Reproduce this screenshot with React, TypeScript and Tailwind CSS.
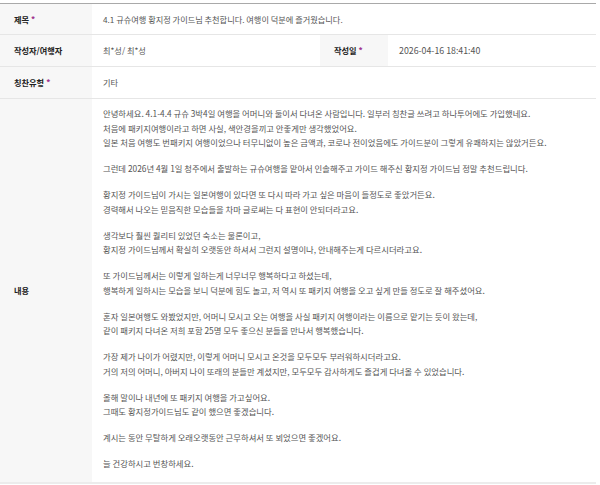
const FONT = { fontFamily: '"Noto Sans CJK KR", "Noto Sans", sans-serif' };

const paragraphs: string[][] = [
  [
    "안녕하세요. 4.1-4.4 규슈 3박4일 여행을 어머니와 둘이서 다녀온 사람입니다. 일부러 칭찬글 쓰려고 하나투어에도 가입했네요.",
    "처음에 패키지여행이라고 하면 사실, 색안경을끼고 안좋게만 생각했었어요.",
    "일본 처음 여행도 번패키지 여행이었으나 터무니없이 높은 금액과, 코로나 전이었음에도 가이드분이 그렇게 유쾌하지는 않았거든요.",
  ],
  ["그런데 2026년 4월 1일 청주에서 출발하는 규슈여행을 맡아서 인솔해주고 가이드 해주신 황지정 가이드님 정말 추천드립니다."],
  [
    "황지정 가이드님이 가시는 일본여행이 있다면 또 다시 따라 가고 싶은 마음이 들정도로 좋았거든요.",
    "경력해서 나오는 믿음직한 모습들을 차마 글로써는 다 표현이 안되더라고요.",
  ],
  [
    "생각보다 훨씬 퀄리티 있었던 숙소는 물론이고,",
    "황지정 가이드님께서 확실히 오랫동안 하셔서 그런지 설명이나, 안내해주는게 다르시더라고요.",
  ],
  [
    "또 가이드님께서는 이렇게 일하는게 너무너무 행복하다고 하셨는데,",
    "행복하게 일하시는 모습을 보니 덕분에 힘도 놀고, 저 역시 또 패키지 여행을 오고 싶게 만들 정도로 잘 해주셨어요.",
  ],
  [
    "혼자 일본여행도 와봤었지만, 어머니 모시고 오는 여행을 사실 패키지 여행이라는 이름으로 맡기는 듯이 왔는데,",
    "같이 패키지 다녀온 저희 포함 25명 모두 좋으신 분들을 만나서 행복했습니다.",
  ],
  [
    "가장 제가 나이가 어렸지만, 이렇게 어머니 모시고 온것을 모두모두 부러워하시더라고요.",
    "거의 저의 어머니, 아버지 나이 또래의 분들만 계셨지만, 모두모두 감사하게도 즐겁게 다녀올 수 있었습니다.",
  ],
  ["올해 말이나 내년에 또 패키지 여행을 가고싶어요.", "그때도 황지정가이드님도 같이 했으면 좋겠습니다."],
  ["계시는 동안 무탈하게 오래오랫동안 근무하셔서 또 뵈었으면 좋겠어요."],
  ["늘 건강하시고 번창하세요."],
];

function Label({ text, required }: { text: string; required?: boolean }) {
  return (
    <div className="flex items-center bg-[#f7f7f7] pl-[14px] text-[8.2px] font-bold text-[#222]">
      {text}
      {required && <span className="ml-[2px] text-[#a0358f]">*</span>}
    </div>
  );
}

function Value({ children }: { children: React.ReactNode }) {
  return <div className="flex items-center pl-[11px] text-[8.2px] text-[#555]">{children}</div>;
}

export default function App() {
  return (
    <div className="h-[485px] w-[600px] bg-white pt-[3px]" style={FONT}>
      <div className="w-[596px] border-t border-b-2 border-t-[#a9a9a9] border-b-[#ececec]">
        {/* 제목 */}
        <div className="grid h-[31px] grid-cols-[92px_1fr] border-b border-[#e6e6e6]">
          <Label text="제목" required />
          <Value>4.1 규슈여행 황지정 가이드님 추천합니다. 여행이 덕분에 즐거웠습니다.</Value>
        </div>

        {/* 작성자 / 작성일 */}
        <div className="grid h-[32px] grid-cols-[92px_228px_68px_1fr] border-b border-[#e6e6e6]">
          <Label text="작성자/여행자" />
          <Value>최*성/ 최*성</Value>
          <Label text="작성일" required />
          <Value>
            <span className="text-[8.8px]">2026-04-16 18:41:40</span>
          </Value>
        </div>

        {/* 칭찬유형 */}
        <div className="grid h-[32px] grid-cols-[92px_1fr] border-b border-[#e6e6e6]">
          <Label text="칭찬유형" required />
          <Value>기타</Value>
        </div>

        {/* 내용 */}
        <div className="grid grid-cols-[92px_1fr]">
          <Label text="내용" />
          <div className="flex flex-col gap-[11.5px] pt-[7px] pb-[11px] pl-[11px] text-[8.35px] leading-[14.5px] text-[#555]">
            {paragraphs.map((lines, i) => (
              <p key={i}>
                {lines.map((line, j) => (
                  <span key={j} className="block whitespace-nowrap">
                    {line}
                  </span>
                ))}
              </p>
            ))}
          </div>
        </div>
      </div>
    </div>
  );
}
